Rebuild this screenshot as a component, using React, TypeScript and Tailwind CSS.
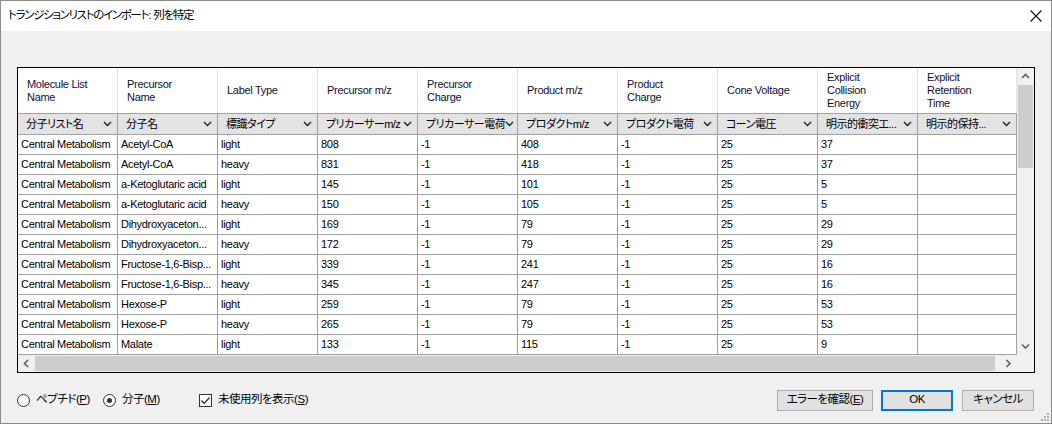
import React from "react";

const cols = [
  { h: ["Molecule List", "Name"], c: "分子リスト名" },
  { h: ["Precursor", "Name"], c: "分子名" },
  { h: ["Label Type"], c: "標識タイプ" },
  { h: ["Precursor m/z"], c: "プリカーサーm/z" },
  { h: ["Precursor", "Charge"], c: "プリカーサー電荷" },
  { h: ["Product m/z"], c: "プロダクトm/z" },
  { h: ["Product", "Charge"], c: "プロダクト電荷" },
  { h: ["Cone Voltage"], c: "コーン電圧" },
  { h: ["Explicit", "Collision", "Energy"], c: "明示的衝突エ..." },
  { h: ["Explicit", "Retention", "Time"], c: "明示的保持..." },
];

const rows: string[][] = [
  ["Central Metabolism", "Acetyl-CoA", "light", "808", "-1", "408", "-1", "25", "37", ""],
  ["Central Metabolism", "Acetyl-CoA", "heavy", "831", "-1", "418", "-1", "25", "37", ""],
  ["Central Metabolism", "a-Ketoglutaric acid", "light", "145", "-1", "101", "-1", "25", "5", ""],
  ["Central Metabolism", "a-Ketoglutaric acid", "heavy", "150", "-1", "105", "-1", "25", "5", ""],
  ["Central Metabolism", "Dihydroxyaceton...", "light", "169", "-1", "79", "-1", "25", "29", ""],
  ["Central Metabolism", "Dihydroxyaceton...", "heavy", "172", "-1", "79", "-1", "25", "29", ""],
  ["Central Metabolism", "Fructose-1,6-Bisp...", "light", "339", "-1", "241", "-1", "25", "16", ""],
  ["Central Metabolism", "Fructose-1,6-Bisp...", "heavy", "345", "-1", "247", "-1", "25", "16", ""],
  ["Central Metabolism", "Hexose-P", "light", "259", "-1", "79", "-1", "25", "53", ""],
  ["Central Metabolism", "Hexose-P", "heavy", "265", "-1", "79", "-1", "25", "53", ""],
  ["Central Metabolism", "Malate", "light", "133", "-1", "115", "-1", "25", "9", ""],
];

function Chevron() {
  return (
    <svg width="9" height="6" viewBox="0 0 9 6" className="shrink-0">
      <path d="M1 1 L4.5 4.5 L8 1" fill="none" stroke="#222" strokeWidth="1.4" />
    </svg>
  );
}

function Arrow({ dir }: { dir: "up" | "down" | "left" | "right" }) {
  const d =
    dir === "up"
      ? "M1 5 L4.5 1.5 L8 5"
      : dir === "down"
      ? "M1 1.5 L4.5 5 L8 1.5"
      : dir === "left"
      ? "M5 1 L1.5 4.5 L5 8"
      : "M1.5 1 L5 4.5 L1.5 8";
  const vert = dir === "up" || dir === "down";
  return (
    <svg width={vert ? 9 : 7} height={vert ? 7 : 9} viewBox={vert ? "0 0 9 7" : "0 0 7 9"}>
      <path d={d} fill="none" stroke="#606060" strokeWidth="1.6" />
    </svg>
  );
}

export default function App() {
  return (
    <div className="w-[1052px] h-[424px] bg-[#f0f0f0] border border-[#8c8c8c] flex flex-col text-[11px] tracking-[-0.3px] text-black [font-family:'Liberation_Sans','Noto_Sans_CJK_JP',sans-serif] [font-feature-settings:'palt'] overflow-hidden relative">
      {/* Title bar */}
      <div className="h-[30px] bg-white flex items-center justify-between pl-[7px] pr-[9px] shrink-0">
        <span className="text-[11.5px] tracking-[-1.3px] leading-none whitespace-pre">
          トランジションリストのインポート:<span className="tracking-normal"> </span>列を特定
        </span>
        <svg width="12" height="12" viewBox="0 0 12 12">
          <path d="M0.5 0.5 L11.5 11.5 M11.5 0.5 L0.5 11.5" stroke="#111" strokeWidth="1.1" />
        </svg>
      </div>

      {/* Body */}
      <div className="flex-1 flex flex-col px-[16px] pt-[36px]">
        <div className="w-[1018px] border border-black bg-white flex flex-col">
          <div className="flex">
            {/* grid */}
            <div className="w-[999px] grid grid-cols-[repeat(9,100px)_99px] leading-none">
              {cols.map((c, i) => (
                <div
                  key={"h" + i}
                  className="h-[45px] border-r border-[#e3e3e3] flex flex-col justify-center pl-[9px] leading-[13px] text-[#101030]"
                >
                  {c.h.map((l, j) => (
                    <span key={j}>{l}</span>
                  ))}
                </div>
              ))}
              {cols.map((c, i) => (
                <div
                  key={"c" + i}
                  className="h-[22px] bg-[#e3e3e3] border-y border-r border-[#a0a0a0] flex items-center justify-between pl-[8px] pr-[5px] text-[11px] tracking-[-0.5px]"
                >
                  <span className="whitespace-nowrap">{c.c}</span>
                  <Chevron />
                </div>
              ))}
              {rows.map((r, ri) =>
                r.map((v, ci) => (
                  <div
                    key={ri + "-" + ci}
                    className="h-[20px] border-b border-r border-[#a0a0a0] flex items-center pl-[3px] whitespace-nowrap overflow-hidden"
                  >
                    {v}
                  </div>
                ))
              )}
            </div>
            {/* vertical scrollbar */}
            <div className="w-[17px] bg-[#f0f0f0] flex flex-col">
              <div className="h-[17px] flex items-center justify-center">
                <Arrow dir="up" />
              </div>
              <div className="h-[83px] bg-[#cdcdcd] mx-[1px]" />
              <div className="flex-1" />
              <div className="h-[17px] flex items-center justify-center">
                <Arrow dir="down" />
              </div>
            </div>
          </div>
          {/* horizontal scrollbar */}
          <div className="h-[17px] flex bg-[#f0f0f0]">
            <div className="w-[17px] flex items-center justify-center">
              <Arrow dir="left" />
            </div>
            <div className="w-[960px] bg-[#cdcdcd] my-[1px]" />
            <div className="w-[5px]" />
            <div className="w-[17px] flex items-center justify-center">
              <Arrow dir="right" />
            </div>
            <div className="w-[17px]" />
          </div>
        </div>

        {/* Bottom controls */}
        <div className="mt-[16px] h-[22px] flex items-center justify-between text-[11.5px] tracking-[-0.5px]">
          <div className="flex items-center">
            <div className="w-[86px] flex items-center gap-[6px]">
              <span className="w-[13px] h-[13px] rounded-full border border-[#333] bg-white" />
              <span>
                ペプチド(<span className="underline">P</span>)
              </span>
            </div>
            <div className="w-[96px] flex items-center gap-[6px]">
              <span className="w-[13px] h-[13px] rounded-full border border-[#333] bg-white flex items-center justify-center">
                <span className="w-[5px] h-[5px] rounded-full bg-[#333]" />
              </span>
              <span>
                分子(<span className="underline">M</span>)
              </span>
            </div>
            <div className="flex items-center gap-[6px]">
              <span className="w-[13px] h-[13px] border border-[#333] bg-white flex items-center justify-center">
                <svg width="11" height="11" viewBox="0 0 11 11">
                  <path d="M1.5 5.5 L4.2 8.3 L9.5 2.5" fill="none" stroke="#222" strokeWidth="1.2" />
                </svg>
              </span>
              <span>
                未使用列を表示(<span className="underline">S</span>)
              </span>
            </div>
          </div>
          <div className="flex items-center mr-[1px]">
            <div className="w-[96px] h-[21px] border border-[#adadad] bg-[#e1e1e1] flex items-center justify-center">
              エラーを確認(<span className="underline">E</span>)
            </div>
            <div className="ml-[8px] w-[72px] h-[21px] border-2 border-[#0078d7] bg-[#e1e1e1] flex items-center justify-center">
              OK
            </div>
            <div className="ml-[9px] w-[72px] h-[21px] border border-[#adadad] bg-[#e1e1e1] flex items-center justify-center">
              キャンセル
            </div>
          </div>
        </div>
      </div>
      {/* resize grip */}
      <svg width="10" height="10" viewBox="0 0 10 10" className="absolute right-[1px] bottom-[1px]">
        <rect x="7" y="1" width="2" height="2" fill="#b0b0b0" />
        <rect x="4" y="4" width="2" height="2" fill="#b0b0b0" />
        <rect x="7" y="4" width="2" height="2" fill="#b0b0b0" />
        <rect x="1" y="7" width="2" height="2" fill="#b0b0b0" />
        <rect x="4" y="7" width="2" height="2" fill="#b0b0b0" />
        <rect x="7" y="7" width="2" height="2" fill="#b0b0b0" />
      </svg>
    </div>
  );
}
